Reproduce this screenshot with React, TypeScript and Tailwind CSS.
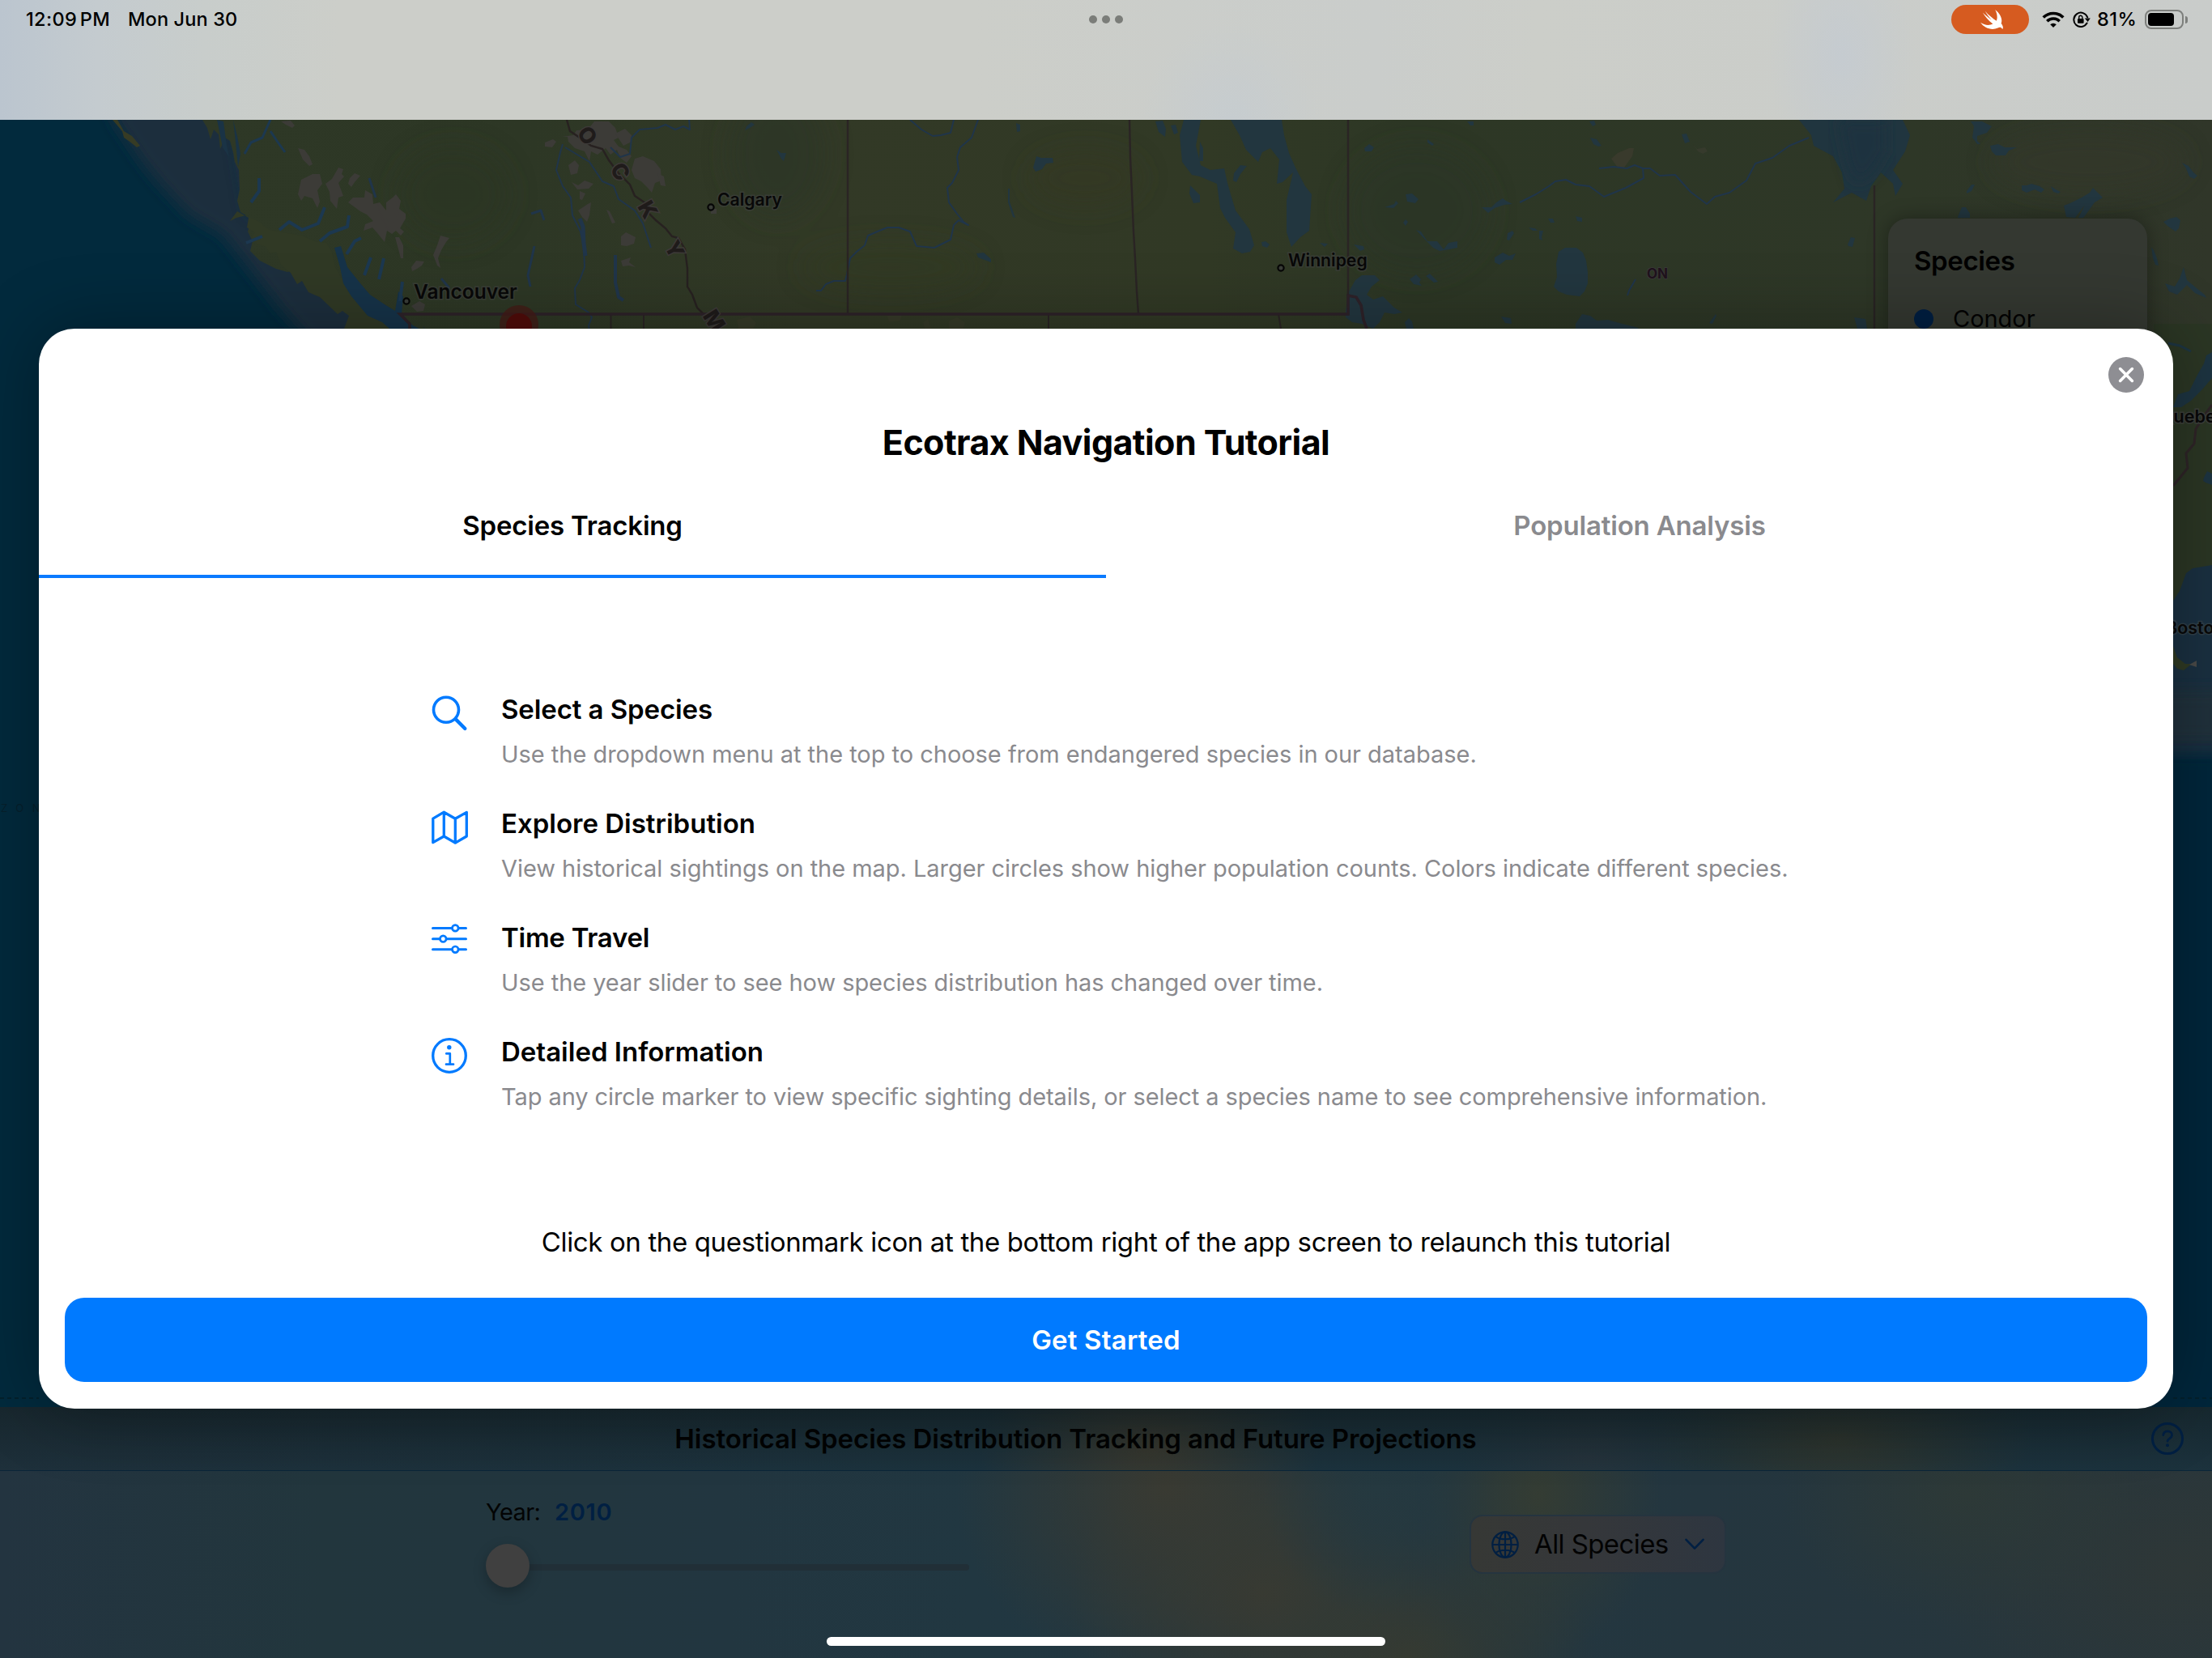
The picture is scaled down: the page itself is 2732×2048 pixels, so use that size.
import type { ReactNode } from 'react';

const WATER = '#22363f';
const RIVER = '#20354a';
const ROCK = '#3f3c3b';

/* ---------- Map ---------- */

function City({ x, y, size, anchorX, anchorY, name }: { x: number; y: number; size: number; anchorX: number; anchorY: number; name: string }) {
  return (
    <g>
      <circle cx={anchorX} cy={anchorY} r={3.6} fill="#3a3d38" stroke="#060606" strokeWidth={2.2} />
      <text x={x} y={y} fontSize={size} fontWeight={600} fill="#080808" stroke="#3c3f3b" strokeWidth={3} strokeOpacity={0.75} paintOrder="stroke">
        {name}
      </text>
    </g>
  );
}

const rangeLetters = [
  { c: 'O', x: 725.5, y: 167.5, r: 52 },
  { c: 'C', x: 766, y: 212, r: 56 },
  { c: 'K', x: 800, y: 259, r: 60 },
  { c: 'Y', x: 833, y: 308, r: 62 },
  { c: 'M', x: 882, y: 396, r: 58 },
];

const smallLakes = [
  'M922 156l6-5 4 3-6 4-6 3z', 'M959 185l6 4 6 0 -3 10-3-3z', 'M1276 207l4-14 6 2 14 0 1 6-9 1-5 7-8 3z',
  'M1255 152l5 2 0 8-4 1z', 'M1245 233l2 0 0 16 7 20-3-1-6-18z', 'M1206 313l9-1 9 8 0 4-8-3-8-3z', 'M1470 229l12 12 0 9-8 1-5-12z',
  'M1427 150l9-1 4 10-1 10-8-6z', 'M1446 155l6-1 3 10-5 2z', 'M1482 175l4 8 0 16-5 0z', 'M1524 214l8-10 8 1-8 10-5 10-4-2z',
  'M1558 299l5-1 5 4-3 4-6-2z', 'M1630 300l10 1-4 4z', 'M1672 302l12 2 1 4-5 2z', 'M1763 172l8 6-2 2-6-4z', 'M1685 183l6-5 6 4-3 5-8 0z',
  'M1736 240l8-1 8 7-4 5-10-2z', 'M1710 256l12-4 2-4 3 3-6 6z', 'M1733 275l3-4 3 3-3 5z', 'M1749 284l6 2 8 12 12 0 8 10 6-8 11-2 0 8-10 2-12 2-8-4-8-8z',
  'M1741 345l8-6 6 6-2 4 3 4-10-2z', 'M1761 341l5-3 10 10-5 1z', 'M1735 398l5-5 4 4 2 9h-9z',
  'M1812 150l8 0 0 5-4 0z', 'M1963 150l6-1 2 5-4 2z', 'M1964 170l8 2 6 8-4 1-6-3z', 'M2077 166l6-1 4 10-6 2z',
  'M1830 256l12 0 6-6 8-5 4 3 8 4-10 1-12 4-8 6z', 'M1912 270l6 0 2 5-5 0z', 'M1946 267l8 2 0 5-6-1z', 'M1862 288l6-3 2 3-6 9-3-1z',
  'M1888 281l8 1 3 3-6 0z', 'M1901 285l5 0-2 8 1 4-4-2z', 'M1846 318l10-6 8 4 8-3-4 8-8 0-8 6-6-3z',
  'M1925 311l8-5 14 0 8 6 4 10 2 14 0 14-4 10-6 6-16-2-10-4-6-6 4-12-1-16z',
  'M1854 391l12 2 1 7-8-1z', 'M1946 400l8-12 10 2 8 6 14-1 14 4 24 6-2 2h-76z', 'M2111 399l8-11 1 2-5 10z', 'M2290 392l14 2 2 12h-12z',
  'M2282 302l4-9 5 1-3 11-5-1z', 'M2434 150l14 0 12 6-6 8-12 4 0 6 4 4-4 0-6-8 2-14z', 'M2458 180l10-2 8 4 15 0-10 4-4 6-12 0-5-5z',
  'M2418 268l5-12 5 0 5 8 0 5h-15z', 'M2429 236l6-8 4 0-4 8-6 3z', 'M2497 229l6 0 6-2 10 3 6 4-4 4-8-4-10 4-6-3z', 'M2533 230l6 4 6 3-3 2-6-2z',
  'M2552 268l-3-14 10-4 12-6 10-6 4-6 12 12-10 6-10 14-4 5-6 0 8-16-12 16z', 'M2695 201l8 4 6 8 5 4-4 4-6-3-4-10z',
  'M2672 274l8-4 8-2 5 4-2 10-4 4-10-7z', 'M2657 305l3 4 4 10 2 9-4-1-3-8z', 'M2674 350l12 4 6-10 5-14 4 16 12 10 10 8 2 4-14-6-10-10-12 12-10-4z',
  'M2678 424l14 4 12 4 6 4-14-4-14-4z', 'M2722 590l4-8 6 3v14l-8-3-3-2z',
];

const rocks = [
  'M347 150l12-1 5 6-3 3-8-4z', 'M368 183l8 2 6 8 4 10-4 2-8-8z', 'M372 222l14-7 9 0 3 12-6 8 3 14-3 8-6-12-10-3-4 6-4-8z',
  'M402 227l8-6 8-14 6 2-2 6 3 3-7 8 3 8 3 8-6 2-2 14-8-10-1-11z', 'M432 220l6-6 7 3-7 8-4 6-4-4z',
  'M430 250l6-6 14 0 1-9 9 5 1 12 8-2 8 10 0-10 8-6 4-4 6 8-2 10 8 6 0 6-7 12 5 4-4 5-6-6-5 4-6-4-3 14-8-10-7-8-11 4 2-8 10-4-8-8-8-4z',
  'M488 293l5 0 5 10 0 16-3 0z', 'M508 330l6-8 10 1-3 5-6 4-6 3z', 'M535 315l5-12 4-12 11 3-4 5-6 10-4 10 3 12-4-3-3-8z',
  'M673 176l10-4 4 3-5 7-9-1z', 'M694 169l14-2 4-6 14-1 8-10 18 0 8 8 4 12-6 3 6 8 10 4 6 8-6 8-8-6-4-10-8 6-6-8-10 8-8-4-2 12-6-12-12-4-8-8-1-6z',
  'M760 165l12-6 8 8 0 8-10 5z', 'M702 204l8-6 5 6-2 10-8 2z', 'M706 225l8 4 8-6 11 4-6 6-14 1z', 'M716 236l7 3-4 8-3-1z', 'M714 260l12-8 4-2-2 16-3 8-6-6z',
  'M784 196l10-3 14 6 8 10 1 14-8 3-4 12-5-6-8-8-8-4-4-10z', 'M812 214l8 4 2 12-6-1z', 'M749 259l4 2 7 14-4 1z', 'M767 292l6-5 12 6-2 8-9 3-7-1z', 'M767 322l12-4-2 6 8 6-8-2-8 1z',
  'M508 378l10-6 7 4-2 8-8 1z',
];

function MapCanvas() {
  return (
    <svg className="block h-full w-full" viewBox="0 148 2732 1590" preserveAspectRatio="none" fontFamily="Inter, sans-serif">
      <defs>
        <linearGradient id="prairie" x1="0" x2="1" y1="0" y2="0">
          <stop offset="0" stopColor="#2e3826" />
          <stop offset="0.16" stopColor="#2d3725" />
          <stop offset="0.3" stopColor="#323926" />
          <stop offset="0.5" stopColor="#313925" />
          <stop offset="0.6" stopColor="#2d3725" />
          <stop offset="0.85" stopColor="#2e3727" />
          <stop offset="1" stopColor="#303629" />
        </linearGradient>
        <filter id="soft" x="-20%" y="-20%" width="140%" height="140%"><feGaussianBlur stdDeviation="9" /></filter>
        <filter id="softer" x="-30%" y="-60%" width="160%" height="220%"><feGaussianBlur stdDeviation="16" /></filter>
      </defs>
      <rect y="148" width="2732" height="1592" fill="#022a3d" />

      <path d="M135 130L140 148l35 52 20 25 37 40 43 25 35 45 35 45 80 90 200 0V130z" fill="#1a2f3e" filter="url(#soft)" />
      <path d="M285 140l20 120 60 40 50 10 40 40 40 60h60l-20-80-80-90-100-30-20-80z" fill="#16324a" opacity="0.7" filter="url(#soft)" />

      <path d="M250 148l6 10 4 14 4-12 6 6 2 18 6-14 6 4 4 14 2 12 5 10 1 24-3 14 4 14 14 8-5 16 6 12-3 12 12 12 20 10 14 4 6-2 20 8 12-2 10 8 8 8 4 14 14 12 8 12 10 8 6-6 8 10 6 12 4 10V420H2732V148z" fill="url(#prairie)" />
      <path d="M284 273l8-4 12-3 16 8 7 6 6 4 22 4 18 3 16 7 14 2 7 12 4 18 8 14 17 14 14 14 20 16 14 14 4 4h-66l6-16-8-6-6 4-22-21-14-6-8-14-6 4-8-14-12-10-6-16-8 2-4-8-12-4-6-8 4-6-10-6 2-12-14-8z" fill="#303925" />
      <path d="M139 148h6l8 14 10 6 10 12-4 2-10-8-6-4-2-8z" fill="#363b24" />
      <path d="M413 306l8-2 8 26 16 20 12 14 18 12 13 8 4-24 6 6-2 22 14 14 16 8-4-8 12 18h-34l-12-8-16-14-18-8-20-24-10-16-4-20z" fill="#163349" />
      <g fill="none" stroke="#1c3850" strokeWidth="5" strokeLinejoin="round">
        <path d="M304 300l20-8M310 250l10-14 0-16M345 284l12-10 16 10 20-8 8-20M395 298l12-10 22-8 2-14M428 314l10-16 8-4M450 340l8-22M468 345l6-26M494 372l3-24" strokeWidth="4" />
        <path d="M302 190l8-14 14-6 10-22M334 162l8 12 10 14" strokeWidth="3" />
      </g>
      <path d="M268 148l8 2 4 30 3 14-8-12zM288 148l5 20 4 22-3 16-3-30z" fill="#1a3345" />

      <g filter="url(#softer)" opacity="0.55">
        <ellipse cx="1340" cy="220" rx="70" ry="35" fill="#363824" />
        <ellipse cx="960" cy="190" rx="60" ry="80" fill="#2a3626" />
        <ellipse cx="1100" cy="330" rx="110" ry="30" fill="#333a24" />
        <ellipse cx="560" cy="240" rx="70" ry="60" fill="#2b3523" />
        <ellipse cx="1750" cy="260" rx="90" ry="80" fill="#2a3626" />
        <ellipse cx="2580" cy="200" rx="120" ry="40" fill="#343729" />
      </g>

      <path d="M2222 148l15 19 3 13 24 13 11 20 3 20-14 17 23-12 18 10 6-18 12-17 15 14 3 15 9-15-12-17 15-23 6-20-9-19z" fill="#20353f" />
      <path d="M2270 148l10 50 10 30 20-10 20-30 0-40z" fill="#1a3041" opacity="0.7" filter="url(#soft)" />
      <path d="M1520 148l11 19 8 18 15 15 5-12 10-5 11 14-3 30 7-2 13-12-8 34 0 40 6 18 11-12 11-8 3-45-8-10-12-23-8-18-6-22-3-19z" fill={WATER} />
      <path d="M1462 148l-5 19 3 33 12 16 10 2 21 9 4 30 6 12 13 18-3 20 11 6 10-2 5-8-6-20-17-23-6-20-4-14-4-18-17 2-12-6-6-24 6-32z" fill={WATER} />
      <path d="M1662 384l4-24 8-14 8-6 16 0 6 6-10 8-6 10 8 6 12-4 14 14 10 6-10 2-12-2-6 12-8 8-14-6-12-2-8-6z" fill={WATER} />
      <g fill={WATER}>{smallLakes.map((d) => <path key={d} d={d} />)}</g>
      <g fill={ROCK} opacity="0.85">{rocks.map((d) => <path key={d} d={d} />)}</g>
      <path d="M1990 196l8-7 14-6 6 0-2 10-10 14-8 0z" fill="#393a2c" />
      <path d="M2091 178l5 6 10-2 3 5-6 3-6-3z" fill="#363a2c" />
      <g fill="#363a28"><path d="M910 395l16-4 8 8-4 7h-18zM1096 390l18-2-2 8-14 2zM1140 398l6-4 4 12h-8zM1172 396l10-4 10 6-2 8h-18z" /></g>

      <g fill="none" stroke={RIVER} strokeWidth="2" strokeLinejoin="round">
        <path d="M695 178l-3 10-5 22 8 20 10 14 2 22 10 20 4 20 1 24-6 16-6 10 1 20 16 10 4 6-4 10 2 14-18 16" />
        <path d="M698 182l30 18 8 12 8 12 14 6 6 16 20 14 10 16 10 30" />
        <path d="M754 182l12 12 12-4 2-20 10-10 22-2 10-4 12 6 10-4 8 4-1-14" />
        <path d="M1124 148l14 12 14 8 10-1 12-3 4-16" />
        <path d="M1208 148l-8 22-14 12-4 12 2 16-8 16-6 6 2 18 10 14 8 10 6 4-12-6-6 6-4 18-20 10-22-2-8-18-14-5-14 0-10 4-14 6-4 12-10 8-8 8-4 20-2 8-14 0-10 4-6 8-6 0" />
        <path d="M760 315v34l4 18 6 4" strokeWidth="4" />
        <path d="M716 270l4 10 1 20 2 16" strokeWidth="5" />
        <path d="M660 304l-8 36 3 14M456 220l8 24M656 264l12-4 4 12M545 344l10 12" strokeWidth="3" />
        <path d="M1877 250l20-10 16-10 8-6 13-2 12 6 17 2 18 13 27-11 22-12-1-12-10-4-10 4-16-2-18 2" />
        <path d="M2029 208l9 0 12 9 19-1 19 21 20 15 10-9 18-5 21-15 11-21 21-7 21-15 24-10" />
        <path d="M2020 345l-8 14-2 6" />
      </g>

      <g fill="none" stroke="#2a2424" strokeWidth="2.4">
        <path d="M1047 148v240M1395 148l1 46 2 44 2 48 2 34 2 40 2 28M1665 148v217M2315 229v177" />
        <path d="M754.500 388v18M795 388v18M1295 388v18M1579 388l3 18" strokeWidth="2" />
        <path d="M700 148l4 14 12 8 14 10 14 4 8 14 12 16 14 14 6 14 12 8 4 12 10 10 12 10 8 10 8 2 8 14 3 24 0 22 6 10 6 16 10 10 14 12" stroke="#272120" />
      </g>
      <path d="M506 406v-6l-12-12H1665v-23l10 2 6 10 3 18 4 11" fill="none" stroke="#2e2229" strokeWidth="3.6" />

      <path d="M2660 400h72v360h-72z" fill="#2b3624" />
      <path d="M2678 424l14 3 14 7" fill="none" stroke="#1d3441" strokeWidth="3" />
      <path d="M2684 503l6-16 14-4 10-20 8-14 3-10 7-4v32l-12 14-14 14-12 8z" fill="#1d3441" />
      <path d="M2722 590l4-8 6 3v14l-8-3-3-2z" fill="#1d3441" />
      <path d="M2732 500l-10 14-10 16-2 18-10 12 2 18-8 10-10 12" fill="none" stroke="#2e2427" strokeWidth="3" />
      <path d="M2684 742l8-12 8-22 8-6 12-2 12-2v240h-72V742z" fill="#1a3041" />
      <path d="M2684 798l5 14 10 8 8 0-10 8-8-2-5-6z" fill="#2f3a24" />
      <path d="M2704 821l9-5v8z" fill="#4a4a48" />
      <rect x="2660" y="852" width="90" height="66" fill="#20333b" opacity="0.8" filter="url(#soft)" />
      <rect x="2640" y="932" width="130" height="830" fill="#02283a" filter="url(#soft)" />
      <path d="M0 1727h48M2684 1727h48" stroke="#04202c" strokeWidth="2" strokeDasharray="5 4" />
      <text x="1" y="1003" fontSize="13" letterSpacing="10.500" fill="#06202c">ZON</text>

      <circle cx="641" cy="401" r="24" fill="#441b17" opacity="0.8" />
      <circle cx="641" cy="403" r="16" fill="#500c0a" />

      <g fontSize="27" fontWeight="800" fill="#1f1b1a" stroke="#3d3a38" strokeWidth="3" paintOrder="stroke" textAnchor="middle">
        {rangeLetters.map((l) => (
          <text key={l.c} x={l.x} y={l.y} transform={`rotate(${l.r} ${l.x} ${l.y})`} dy="9.500">{l.c}</text>
        ))}
      </g>
      <rect x="878" y="258" width="7" height="6" fill="#3c3c38" />
      <City name="Vancouver" x={511} y={368.5} size={24.5} anchorX={502} anchorY={372} />
      <City name="Calgary" x={886} y={254} size={21.2} anchorX={878} anchorY={256} />
      <City name="Winnipeg" x={1591} y={329} size={21.2} anchorX={1582} anchorY={331} />
      <text x="2668" y="522" fontSize="21.500" fontWeight="600" fill="#080808" stroke="#3c3f3b" strokeWidth="3" paintOrder="stroke">Quebec</text>
      <text x="2675" y="783" fontSize="21.500" fontWeight="600" fill="#080808" stroke="#2f3f48" strokeWidth="3" paintOrder="stroke">Boston</text>
      <text x="2034" y="344" fontSize="17" fontWeight="700" fill="#1f121c" stroke="#3c3a3b" strokeWidth="1.500" paintOrder="stroke">ON</text>
    </svg>
  );
}

function Legend() {
  return (
    <div className="absolute left-[2332px] top-[122px] flex h-[480px] w-80 flex-col rounded-3xl bg-[#343831] px-8 pt-8 shadow-[0_0_24px_rgba(0,0,0,0.35)]">
      <div className="whitespace-nowrap text-[33px] font-semibold leading-10 tracking-[-0.011em] text-[#020202]">Species</div>
      <div className="mt-[34px] flex items-center gap-6">
        <span className="size-6 rounded-full bg-[#001f42]" />
        <span className="text-[29px] leading-9 tracking-[-0.001em] text-[#030303]">Condor</span>
      </div>
    </div>
  );
}

/* ---------- Status bar ---------- */

function SwiftBird() {
  return (
    <svg className="ml-1 h-[24px] w-7" viewBox="0 0 82 70" fill="#fff">
      <path d="M53 0C72 14 81 34 75 50 82 58 83 66 80 70 74 62 68 63 63 66 40 76 14 66 0 46 14 56 32 58 45 51 30 40 17 24 8 10 18 20 30 29 40 36 30 26 22 14 17 5 30 20 45 32 58 40 63 28 60 12 53 0Z" />
    </svg>
  );
}

function WifiIcon() {
  return (
    <svg className="h-5 w-7" viewBox="0 0 28 20" fill="none" stroke="#000" strokeWidth="3.6">
      <path d="M1.700 7.600a17.300 17.300 0 0 1 24.600 0" />
      <path d="M6.300 12.200a10.900 10.900 0 0 1 15.400 0" />
      <path d="M10.200 16.200a5.400 5.400 0 0 1 7.600 0L14 20z" fill="#000" stroke="none" />
    </svg>
  );
}

function RotationLockIcon() {
  return (
    <svg className="h-5 w-[22px]" viewBox="0 0 22 20" fill="none">
      <path d="M17.600 14.600A8.700 8.700 0 1 1 18.200 7.400" stroke="#000" strokeWidth="2" strokeLinecap="round" />
      <path d="M14.800 8.400h7l-3.200 4.600z" fill="#000" />
      <rect x="6" y="9" width="7.600" height="5.800" rx="1" fill="#000" />
      <path d="M7.700 9V7.400a2.100 2.100 0 0 1 4.200 0V9" stroke="#000" strokeWidth="1.400" />
    </svg>
  );
}

function StatusBar() {
  return (
    <header className="flex h-[148px] w-full items-start bg-[radial-gradient(90px_150px_at_2275px_70px,#c5cbd0,transparent),radial-gradient(110px_120px_at_1520px_148px,#c6cccf,transparent),linear-gradient(90deg,#bbc5cf_0px,#c4cbcf_120px,#c8cdcb_250px,#cccec9_420px,#cccec9_1200px,#cacdcb_1700px,#cccec9_1900px,#c9ccca_2732px)]">
      <div className="flex h-12 w-full items-center pl-8 text-[23.500px] font-medium leading-6 text-black">
        <span className="w-[126px] whitespace-nowrap tracking-[0.015em] [word-spacing:-3px]">12:09 PM</span>
        <span className="w-[400px] whitespace-nowrap tracking-[0.006em]">Mon Jun 30</span>
        <div className="ml-[787px] flex gap-1.5">
          <span className="size-2.5 rounded-full bg-[#7b7d79]" />
          <span className="size-2.5 rounded-full bg-[#7b7d79]" />
          <span className="size-2.5 rounded-full bg-[#7b7d79]" />
        </div>
        <div className="ml-auto flex items-center pr-[30px]">
          <span className="flex h-9 w-24 items-center justify-center rounded-full bg-[#d65b20]">
            <SwiftBird />
          </span>
          <span className="ml-4 flex"><WifiIcon /></span>
          <span className="ml-2.5 flex"><RotationLockIcon /></span>
          <span className="ml-2 w-[59px] whitespace-nowrap tracking-[0.018em]">81%</span>
          <span className="flex h-6 w-12 rounded-[8px] border-2 border-[#7d7f7c] p-0.5">
            <span className="h-4 w-8 rounded-[4px] bg-black" />
          </span>
          <span className="ml-0.5 h-[9px] w-[3px] rounded-r-full bg-[#7d7f7c]" />
        </div>
      </div>
    </header>
  );
}

/* ---------- Bottom panels ---------- */

function HelpIcon() {
  return (
    <svg className="size-10" viewBox="0 0 40 40" fill="none" stroke="#001f42" strokeLinecap="round">
      <circle cx="20" cy="20" r="18.500" strokeWidth="3" />
      <path d="M14.800 15.600c.4-3 2.500-4.700 5.400-4.700 3 0 5.300 1.800 5.300 4.500 0 2.300-1.300 3.400-2.900 4.400-1.700 1-2.500 1.700-2.500 3.400" strokeWidth="2.700" />
      <circle cx="20" cy="28.300" r="2" fill="#001f42" stroke="none" />
    </svg>
  );
}

function GlobeIcon() {
  return (
    <svg className="size-[34px]" viewBox="0 0 34 34" fill="none" stroke="#001f42" strokeWidth="2.200">
      <circle cx="17" cy="17" r="15.700" />
      <ellipse cx="17" cy="17" rx="7.600" ry="15.700" />
      <path d="M17 1.300v31.400M1.300 17h31.400M5.200 6.800c6 4.600 17.600 4.600 23.600 0M5.200 27.200c6-4.600 17.600-4.600 23.600 0" />
    </svg>
  );
}

function BottomPanels() {
  return (
    <>
      <div className="flex h-[78px] items-center bg-[linear-gradient(180deg,rgba(16,28,30,0.45),transparent),radial-gradient(210px_130px_at_1420px_50px,#3a392f,transparent),radial-gradient(240px_110px_at_2270px_40px,#31372f,transparent),radial-gradient(160px_90px_at_1960px_60px,#26343d,transparent),linear-gradient(90deg,#1e303b,#1c323d_1100px,#1c323d)] pr-[35px]">
        <div className="flex-1 whitespace-nowrap text-center text-[33px] font-semibold leading-10 tracking-[-0.0025em] text-[#020303]">
          Historical Species Distribution Tracking and Future Projections
        </div>
        <HelpIcon />
      </div>
      <div className="h-px bg-[#0a2538]" />
      <div className="flex flex-1 items-start bg-[radial-gradient(140px_160px_at_1700px_20px,#253940,transparent),radial-gradient(260px_240px_at_1440px_20px,#393a32,transparent),radial-gradient(240px_200px_at_1560px_150px,#373a32,transparent),radial-gradient(230px_160px_at_1740px_231px,#353a31,transparent),radial-gradient(150px_200px_at_1900px_30px,#343c33,transparent),radial-gradient(230px_160px_at_2430px_30px,#2d3937,transparent),radial-gradient(330px_200px_at_2700px_120px,#2e3737,transparent),linear-gradient(90deg,#233440,#22363d_400px,#223640_900px,#213741_1200px,#24363f_2100px,#28363c)] pl-[600px]">
        <div className="flex w-[597px] flex-col pt-[33px]">
          <div className="flex text-[29px] leading-9">
            <span className="w-[85px] whitespace-nowrap tracking-[-0.02em] text-[#030404]">Year:</span>
            <span className="font-semibold tracking-[0.022em] text-[#001f42]">2010</span>
          </div>
          <div className="mt-[21px] flex h-[54px] items-center">
            <span className="z-10 size-[54px] rounded-full bg-[#404040] shadow-[0_6px_16px_rgba(0,0,0,0.25)]" />
            <span className="-ml-2 mt-1 h-2 flex-1 rounded-r-full bg-[#212f37]" />
          </div>
        </div>
        <div className="ml-[618px] mt-[54px] flex h-[73px] w-[317px] items-center rounded-2xl border-2 border-[#25343f] bg-[linear-gradient(90deg,#363835,#35373a_45%,#2e3640)] pl-[25px]">
          <GlobeIcon />
          <span className="-mt-0.5 ml-[19px] w-[167px] whitespace-nowrap text-[33px] leading-10 tracking-[-0.018em] text-[#030303]">All Species</span>
          <svg className="ml-[19px] h-[15px] w-6" viewBox="0 0 24 15" fill="none" stroke="#001f42" strokeWidth="2.600" strokeLinecap="round" strokeLinejoin="round">
            <path d="M1.500 1.800L12 12.600 22.500 1.800" />
          </svg>
        </div>
      </div>
    </>
  );
}

/* ---------- Tutorial sheet ---------- */

const iconProps = {
  className: 'size-12 shrink-0',
  viewBox: '0 0 48 48',
  fill: 'none',
  stroke: '#007aff',
  strokeLinecap: 'round' as const,
  strokeLinejoin: 'round' as const,
};

const steps: { icon: ReactNode; title: string; track: string; text: string; textTrack: string }[] = [
  {
    icon: (
      <svg {...iconProps}>
        <circle cx="19" cy="20.700" r="15.500" strokeWidth="3.600" />
        <path d="M30.800 32.400L42.300 44" strokeWidth="4.400" />
      </svg>
    ),
    title: 'Select a Species',
    track: 'tracking-[-0.003em]',
    text: 'Use the dropdown menu at the top to choose from endangered species in our database.',
    textTrack: 'tracking-[-0.001em]',
  },
  {
    icon: (
      <svg {...iconProps} strokeWidth="3.300">
        <path d="M2.800 14.200L16.300 6.200 30.300 14.200 44.300 6.400V36L30.300 44.200 16.300 36 2.800 43.600zM16.300 6.200V36M30.300 14.200v30" />
      </svg>
    ),
    title: 'Explore Distribution',
    track: 'tracking-[0em]',
    text: 'View historical sightings on the map. Larger circles show higher population counts. Colors indicate different species.',
    textTrack: 'tracking-[-0.0015em]',
  },
  {
    icon: (
      <svg {...iconProps} strokeWidth="3">
        <path d="M2.500 8.400h41M2.500 21.700h41M2.500 34.800h41" />
        <g fill="#fff" strokeWidth="2.700">
          <circle cx="30.300" cy="8.400" r="3.800" />
          <circle cx="15.300" cy="21.700" r="3.800" />
          <circle cx="30.300" cy="34.800" r="3.800" />
        </g>
      </svg>
    ),
    title: 'Time Travel',
    track: 'tracking-[-0.008em]',
    text: 'Use the year slider to see how species distribution has changed over time.',
    textTrack: 'tracking-[-0.002em]',
  },
  {
    icon: (
      <svg {...iconProps}>
        <circle cx="23" cy="25" r="20.300" strokeWidth="3.300" />
        <circle cx="22.800" cy="14.800" r="2.700" fill="#007aff" stroke="none" />
        <path d="M19.300 22.400h4.500v13.300M19 35.700h9" strokeWidth="2.700" />
      </svg>
    ),
    title: 'Detailed Information',
    track: 'tracking-[0em]',
    text: 'Tap any circle marker to view specific sighting details, or select a species name to see comprehensive information.',
    textTrack: 'tracking-[-0.0028em]',
  },
];

function TutorialSheet() {
  return (
    <section className="absolute left-12 top-[406px] flex h-[1334px] w-[2636px] flex-col rounded-[44px] bg-white pt-[35px] shadow-[0_0_90px_rgba(0,0,0,0.32)]">
      <div className="flex justify-end pr-9">
        <svg className="size-11" viewBox="0 0 44 44">
          <circle cx="22" cy="22" r="22" fill="#8e8e93" />
          <path d="M14.600 14.600l14.800 14.800M29.400 14.600L14.600 29.400" stroke="#fff" strokeWidth="3.600" strokeLinecap="round" />
        </svg>
      </div>
      <h1 className="mt-[35px] text-center text-[43px] font-bold leading-[52px] tracking-[-0.0135em] text-black">Ecotrax Navigation Tutorial</h1>
      <div className="mt-[57px] grid grid-cols-2 text-center text-[33px] font-semibold leading-10 tracking-[-0.0055em]">
        <div className="text-black">Species Tracking</div>
        <div className="text-[#8a8a8e]">Population Analysis</div>
      </div>
      <div className="mt-[41px] h-1 w-1/2 bg-[#0a7aff]" />
      <div className="mt-[142px] flex flex-col gap-12 pl-[484px]">
        {steps.map((s) => (
          <div key={s.title} className="flex h-[93px] gap-[39px]">
            {s.icon}
            <div className="flex flex-col gap-[18px] whitespace-nowrap">
              <div className={`text-[33px] font-semibold leading-10 text-black ${s.track}`}>{s.title}</div>
              <div className={`text-[29px] leading-9 text-[#8a8a8e] ${s.textTrack}`}>{s.text}</div>
            </div>
          </div>
        ))}
      </div>
      <p className="mt-[142px] text-center text-[33px] leading-10 tracking-[-0.011em] text-black">
        Click on the questionmark icon at the bottom right of the app screen to relaunch this tutorial
      </p>
      <button className="mx-8 mt-[49px] flex h-[104px] items-center justify-center rounded-3xl bg-[#007aff] text-[33px] font-semibold leading-10 tracking-[0.006em] text-white">
        Get Started
      </button>
    </section>
  );
}

export default function App() {
  return (
    <div className="relative flex h-[2048px] w-[2732px] flex-col overflow-hidden bg-[#02293f] font-[Inter,sans-serif]">
      <StatusBar />
      <main className="relative h-[1590px] shrink-0">
        <MapCanvas />
        <Legend />
      </main>
      <BottomPanels />
      <TutorialSheet />
      <div className="absolute bottom-[15px] left-[1021px] h-[11px] w-[690px] rounded-full bg-white" />
    </div>
  );
}
